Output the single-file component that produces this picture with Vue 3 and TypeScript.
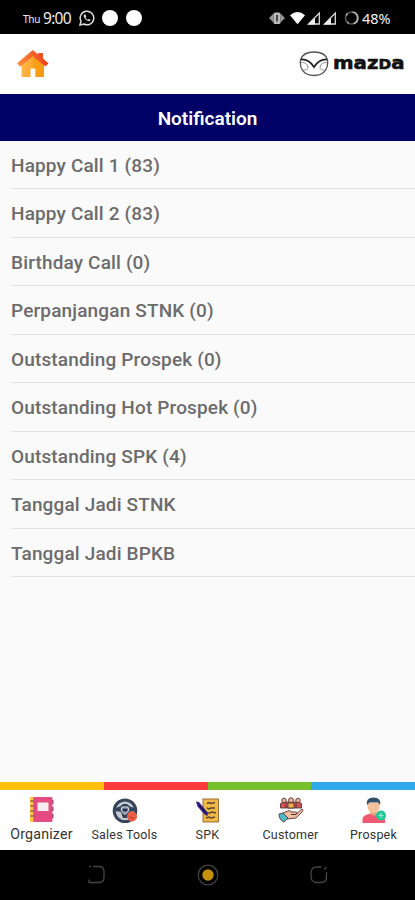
<script setup lang="ts">
interface Row { label: string; count?: number }

const rows: Row[] = [
  { label: 'Happy Call 1', count: 83 },
  { label: 'Happy Call 2', count: 83 },
  { label: 'Birthday Call', count: 0 },
  { label: 'Perpanjangan STNK', count: 0 },
  { label: 'Outstanding Prospek', count: 0 },
  { label: 'Outstanding Hot Prospek', count: 0 },
  { label: 'Outstanding SPK', count: 4 },
  { label: 'Tanggal Jadi STNK' },
  { label: 'Tanggal Jadi BPKB' },
]

const text = (r: Row): string => (r.count === undefined ? r.label : `${r.label} (${r.count})`)
</script>

<template>
  <div class="screen">
    <div class="status">
      <span class="day">Thu</span>
      <span class="clock">9:00</span>
      <svg class="wa" width="16" height="16" viewBox="0 0 16 16" fill="none" stroke="#ddd">
        <path d="M1 15l1-3.8A6.8 6.8 0 1 1 4.800 14z" stroke-width="1.5" />
        <path d="M5.300 4.500c-.9.8-.8 2 .2 3.600 1.200 1.900 2.800 3 4.400 3.100 1 0 1.600-.6 1.700-1.400L9.800 8.900l-.9.900C7.800 9.300 7 8.500 6.500 7.400l.8-.9-.8-2z" fill="#ddd" stroke="none" />
      </svg>
      <span class="dot"></span>
      <span class="dot second"></span>
      <svg class="signals" width="76" height="18" viewBox="0 0 76 18">
        <path d="M0 9l4.500-4.500v9zM16 9l-4.500-4.500v9z" fill="#999" />
        <rect x="4.500" y="3.500" width="7" height="11.500" rx="1.500" fill="#bbb" />
        <path d="M8 6v6.500" stroke="#222" stroke-width="1.500" />
        <path d="M21 6.200Q28.500-.2 36 6.200L28.500 15.200z" fill="#fff" />
        <g fill="none" stroke="#ddd" stroke-width="1.300">
          <path d="M39.500 15h10.800V4z" /><path d="M55.500 15h10.800V4z" />
        </g>
        <path d="M39 15.500h7V8.700zM55 15.500h7V8.700z" fill="#eee" />
      </svg>
      <svg class="ring" width="15" height="16" viewBox="0 0 15 16" fill="none">
        <circle cx="7.500" cy="8" r="6" stroke="#555" stroke-width="1.700" />
        <path d="M8.500 2a6 6 0 0 1 1 11.700" stroke="#bbb" stroke-width="1.700" />
        <path d="M2 5.500l1.500-2M3 12l2 1.500" stroke="#aaa" stroke-width="1.500" />
      </svg>
      <span class="battery">48%</span>
    </div>

    <header class="brand">
      <svg width="32" height="28" viewBox="0 0 32 28">
        <defs>
          <linearGradient id="wall" x1="0" x2="1"><stop offset="0" stop-color="#ffb64a" /><stop offset="1" stop-color="#f89a12" /></linearGradient>
          <linearGradient id="roof" x1="0" x2="1"><stop offset="0" stop-color="#ff9345" /><stop offset=".45" stop-color="#f4662b" /><stop offset="1" stop-color="#ed3f1c" /></linearGradient>
        </defs>
        <path d="M4.500 13L16 3l11 10v14h-8.500v-8.500h-5V27h-9z" fill="url(#wall)" />
        <path d="M16 5v13.500h2.500V27H27V13z" fill="#f59b12" opacity=".7" />
        <path d="M0 13.300L15.800 0l5.400 4.600V3H26v5.600l5.600 4.700-3.100 3.100L15.800 6.200 3.100 16.400z" fill="url(#roof)" />
      </svg>
      <svg class="mazda" width="108" height="28" viewBox="0 0 108 28">
        <g fill="none">
          <path d="M1.500 10C3 4.500 8 2 15 2s12 2.500 13.500 8c1 7-2 15.500-13.500 15.500S.5 17 1.500 10z" stroke="#555" stroke-width="1.300" />
          <path d="M2 9.500c5-.3 8.700 1 13 7.500 4.300-6.500 8-7.800 13-7.500" stroke="#222" stroke-width="1.800" />
          <path d="M2 12.500c4-.2 6.500 1.500 7 4.500.3 3-3 3-5 3M28 12.500c-4-.2-6.500 1.500-7 4.500-.3 3 3 3 5 3" stroke="#777" stroke-width=".8" />
        </g>
        <text x="34" y="19" textLength="71.500" lengthAdjust="spacingAndGlyphs" class="word">maz<tspan class="cap">d</tspan>a</text>
      </svg>
    </header>

    <h1 class="title">Notification</h1>

    <ul class="list">
      <li v-for="r in rows" :key="r.label">{{ text(r) }}</li>
    </ul>

    <div class="stripe"><i class="yellow"></i><i class="red"></i><i class="green"></i><i class="blue"></i></div>

    <nav class="tabs">
      <a class="tab active">
        <svg width="26" height="28" viewBox="0 0 26 28">
          <rect x="1" y="1" width="6" height="25" fill="#ffc64a" />
          <rect x="5" y="1" width="18.500" height="25" rx="1.500" fill="#e44b82" />
          <path d="M23 4h1.500v4H23zM23 11h1.500v4H23zM23 18h1.500v4H23z" fill="#a7447b" />
          <rect x="8.500" y="6.500" width="11" height="8.500" fill="#f4ecef" />
          <path d="M5 1v25" stroke="#c73870" />
          <path d="M1.500 5h3M1.500 10h3M1.500 15h3M1.500 20h3" stroke="#7a6350" stroke-width="1.500" />
        </svg>
        <span>Organizer</span>
      </a>
      <a class="tab">
        <svg width="26" height="28" viewBox="0 0 26 28">
          <circle cx="13" cy="14.800" r="10.800" fill="#c6cbd2" stroke="#37455a" stroke-width="3" />
          <path d="M3 12l5-1.500 3-2.500h4l3 2.500 5 1.500v3l-6 1-2 6h-4l-2-6-6-1z" fill="#34435a" />
          <path d="M10 11h6l1 3-3 4h-2l-3-4z" fill="#718096" stroke="#dce2e8" />
          <path d="M11 14h4" stroke="#202b3f" stroke-width="2" />
          <circle cx="20" cy="20.500" r="5" fill="#ef5b43" /><path d="M18 20l2 3 2-2" stroke="#a83835" fill="none" />
        </svg>
        <span>Sales Tools</span>
      </a>
      <a class="tab">
        <svg width="26" height="28" viewBox="0 0 26 28">
          <rect x="8" y="3" width="15.500" height="23" fill="#efb947" stroke="#997039" />
          <path d="M12 7.500l2-1 2 1 4-1M12 12l2 1 2-1h4M11 17h4l2-1 4 1M11 22l3-1 2 1 4-1" fill="none" stroke="#5c4836" stroke-width="1.400" />
          <path d="M1 5.500l3 .5 9 11-.5 3-3-1.500-7-8z" fill="#39248a" /><path d="M4 9l7 8" stroke="#201559" stroke-width="1.500" />
        </svg>
        <span>SPK</span>
      </a>
      <a class="tab">
        <svg width="26" height="28" viewBox="0 0 26 28">
          <g stroke="#54383d" stroke-width=".9">
            <path d="M2.500 12V7.500l3-1.500h15l3 1.500V12z" fill="#d65053" />
            <circle cx="6" cy="4.500" r="2.300" fill="#eab08e" /><circle cx="13" cy="4.300" r="2.500" fill="#eab08e" /><circle cx="20" cy="4.500" r="2.300" fill="#eab08e" />
            <path d="M10 12V7h6v5z" fill="#efb04b" />
            <path d="M5 17l6-2.500 3 1.500h4c2 0 1 2.500-1 2.500h-4 5l5-5c2-1 2.700 1 1 2.500L18 22l-9 1z" fill="#efbd9b" />
            <path d="M1 18l4-1 5 5-4 4q-5-2-5-8z" fill="#54b7c5" />
          </g>
          <path d="M8 7v5M18 7v5" stroke="#54383d" />
        </svg>
        <span>Customer</span>
      </a>
      <a class="tab">
        <svg width="26" height="28" viewBox="0 0 26 28">
          <path d="M1.500 27v-4q0-4 8-5.500h6.500q8 1.500 8 6V27z" fill="#f05a70" />
          <path d="M9.500 14h6.500v4q-3.300 3-6.500 0z" fill="#e8a27d" />
          <path d="M6.500 7h12v4q-1 6-6 6t-6-6z" fill="#f6c09b" />
          <path d="M6 9Q4.500 1.500 12.500 1.500T19 9l-2-2.500H8.500z" fill="#36506b" />
          <circle cx="20" cy="19.500" r="5" fill="#20c997" /><path d="M17.500 19.500h5M20 17v5" stroke="#91ead3" stroke-width="1.200" />
        </svg>
        <span>Prospek</span>
      </a>
    </nav>

    <div class="system">
      <svg width="18" height="20" viewBox="0 0 18 20" fill="none" stroke="#454545" stroke-width="1.300"><path d="M1 1.500h2M5 1.500h6q5 0 5 5v6q0 5-5 5H1v-3" /></svg>
      <svg width="24" height="24" viewBox="0 0 24 24"><circle cx="12" cy="12" r="9.800" fill="none" stroke="#424242" stroke-width="1.300" /><circle cx="12" cy="12" r="5.700" fill="#c4920c" /></svg>
      <svg width="20" height="20" viewBox="0 0 20 20" fill="none" stroke="#454545" stroke-width="1.300"><path d="M12.500 2H8Q2 2 2 8v3.500q0 6 6 6h4q5.500 0 5.500-5.500V7M15 4.500l2.500-2.500" /></svg>
    </div>
  </div>
</template>

<style>
body { margin: 0; background: #fafafa; }
</style>

<style scoped>
.screen { width: 415px; height: 900px; display: flex; flex-direction: column; overflow: hidden; background: #fafafa; font-family: Roboto, "Noto Sans", sans-serif; }
.status { height: 34px; flex: none; box-sizing: border-box; padding: 1px 22px 0 23px; display: flex; align-items: center; background: #000; color: #eee; font-family: "Noto Sans", sans-serif; }
.day { font-size: 10px; width: 20px; padding-top: 3px; letter-spacing: -.3px; }
.clock { font-size: 15.500px; width: 36px; letter-spacing: -.7px; }
.dot { width: 16px; height: 16px; border-radius: 50%; background: #fff; margin-left: 7px; }
.second { margin-left: 8px; }
.signals { margin-left: auto; }
.ring { margin-left: -1px; }
.battery { font-size: 14.500px; margin-left: 3px; width: 31px; letter-spacing: 0; }
.brand { height: 60px; flex: none; box-sizing: border-box; padding: 0 8px 0 17px; display: flex; align-items: center; justify-content: space-between; background: #fff; }
.word { font: 700 18px "DejaVu Sans", sans-serif; fill: #111; stroke: #111; stroke-width: .6px; }
.cap { font-variant: small-caps; font-size: 19.300px; }
.title { margin: 0; height: 47px; flex: none; background: #000066; color: #fff; font-size: 19px; line-height: 49px; font-weight: 600; text-align: center; }
.list { margin: 0; padding: 0 0 0 11px; list-style: none; flex: 1; }
.list li { box-sizing: border-box; height: 48.450px; border-bottom: 1px solid #e3e3e3; line-height: 50px; font-size: 19px; font-weight: 500; color: #6c6c6c; letter-spacing: .15px; white-space: nowrap; }
.stripe { height: 8px; flex: none; display: grid; grid-template-columns: repeat(4, 1fr); }
.yellow { background: #ffbf0b; }
.red { background: #ff3b3e; }
.green { background: #76c12b; }
.blue { background: #2fa9ea; }
.tabs { height: 60px; flex: none; background: #fff; display: grid; grid-template-columns: repeat(5, 1fr); }
.tab { display: flex; flex-direction: column; align-items: center; padding-top: 6px; font-size: 12.500px; line-height: 16px; color: #333; letter-spacing: .2px; }
.tab span { margin-top: 3px; white-space: nowrap; }
.active { font-size: 14.200px; }
.active span { margin-top: 2px; }
.system { height: 50px; flex: none; background: #000; display: flex; align-items: center; justify-content: space-between; box-sizing: border-box; padding: 0 86px 0 88px; }
</style>
